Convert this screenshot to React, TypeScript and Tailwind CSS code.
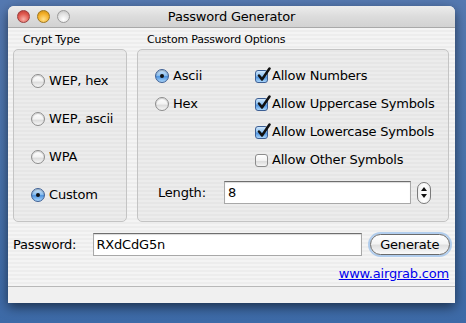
import React from "react";

const font = { fontFamily: '"DejaVu Sans", "Liberation Sans", sans-serif' };

function Radio({ on }: { on?: boolean }) {
  if (on) {
    return (
      <div className="relative w-[14px] h-[14px] rounded-full border border-[#3d5f94] bg-[linear-gradient(180deg,#cfe6fb_0%,#8cc0f0_45%,#4f94e0_55%,#a9d5fa_100%)] shadow-[inset_0_1px_1px_rgba(0,0,0,0.25)] flex items-center justify-center shrink-0">
        <div className="w-[4px] h-[4px] rounded-full bg-[#111]" />
      </div>
    );
  }
  return (
    <div className="w-[14px] h-[14px] rounded-full border border-[#8c8c8c] bg-[linear-gradient(180deg,#ffffff_0%,#f2f2f2_50%,#dcdcdc_60%,#f6f6f6_100%)] shadow-[inset_0_1px_1px_rgba(0,0,0,0.2)] shrink-0" />
  );
}

function Check({ on }: { on?: boolean }) {
  return (
    <div
      className={
        "relative w-[13px] h-[13px] rounded-[3px] border shrink-0 " +
        (on
          ? "border-[#3d5f94] bg-[linear-gradient(180deg,#cfe6fb_0%,#8cc0f0_45%,#4f94e0_55%,#a9d5fa_100%)]"
          : "border-[#8c8c8c] bg-[linear-gradient(180deg,#ffffff_0%,#f2f2f2_50%,#dcdcdc_60%,#f6f6f6_100%)]")
      }
    >
      {on && (
        <svg className="absolute left-[1px] top-[-4px]" width="14" height="15" viewBox="0 0 14 15">
          <path d="M2 8.5 L5 12.5 L12.5 1.5" stroke="#111" strokeWidth="2.5" fill="none" strokeLinecap="round" strokeLinejoin="round" />
        </svg>
      )}
    </div>
  );
}

function TextField({ value, w }: { value: string; w: string }) {
  return (
    <div
      className={
        w +
        " h-[23px] bg-white border border-[#a8a8a8] border-t-[#6e6e6e] shadow-[inset_0_1px_1px_rgba(0,0,0,0.15)] flex items-center pl-[3px] text-[13px] tracking-[-0.2px] text-black"
      }
    >
      {value}
    </div>
  );
}

export default function App() {
  return (
    <div
      className="w-[466px] h-[323px] overflow-hidden bg-[linear-gradient(180deg,#5579b1_0%,#4a74ad_50%,#3d6aa7_100%)] pt-[6px] pl-[8px]"
      style={font}
    >
      <div className="w-[447px] h-[297px] rounded-t-[6px] overflow-hidden shadow-[0_4px_12px_rgba(0,0,0,0.55)] flex flex-col bg-[repeating-linear-gradient(180deg,#ededed_0px,#ededed_2px,#f4f4f4_2px,#f4f4f4_4px)]">
        {/* title bar */}
        <div className="relative h-[22px] shrink-0 bg-[linear-gradient(180deg,#ececec_0%,#dcdcdc_50%,#d2d2d2_100%)] border-b border-[#a9a9a9] flex items-center justify-center">
          <div className="absolute left-[9px] top-[4px] flex gap-[7px]">
            <div className="w-[13px] h-[13px] rounded-full border border-[#9a3d3d] bg-[radial-gradient(circle_at_50%_75%,#f8b0a8_0%,#e05a50_55%,#b83530_100%)]" />
            <div className="w-[13px] h-[13px] rounded-full border border-[#a0761c] bg-[radial-gradient(circle_at_50%_75%,#ffe08a_0%,#f5b12a_55%,#c98a10_100%)]" />
            <div className="w-[13px] h-[13px] rounded-full border border-[#9a9a9a] bg-[radial-gradient(circle_at_50%_75%,#ffffff_0%,#e2e2e2_55%,#bdbdbd_100%)]" />
          </div>
          <span className="text-[13px] tracking-[-0.2px] text-black leading-none">Password Generator</span>
        </div>

        {/* body */}
        <div className="flex-1 flex flex-col px-[5px] pt-[5px] text-[13px] tracking-[-0.2px]">
          <div className="flex gap-[10px]">
            {/* crypt type */}
            <div className="flex flex-col w-[114px]">
              <div className="text-[11px] tracking-[-0.2px] leading-[13px] pl-[10px] h-[14px] text-black">Crypt Type</div>
              <div className="mt-[2px] h-[173px] rounded-[5px] border border-[#c4c4c4] bg-[repeating-linear-gradient(180deg,#e6e6e6_0px,#e6e6e6_2px,#ececec_2px,#ececec_4px)] pt-[12px] pl-[17px] flex flex-col">
                {[
                  ["WEP, hex", false],
                  ["WEP, ascii", false],
                  ["WPA", false],
                  ["Custom", true],
                ].map(([l, on]) => (
                  <div key={l as string} className="h-[38px] flex items-center gap-[4px] text-black">
                    <Radio on={on as boolean} />
                    <span>{l as string}</span>
                  </div>
                ))}
              </div>
            </div>

            {/* custom options */}
            <div className="flex flex-col w-[312px]">
              <div className="text-[11px] tracking-[-0.2px] leading-[13px] pl-[10px] h-[14px] text-black">Custom Password Options</div>
              <div className="mt-[2px] h-[173px] rounded-[5px] border border-[#c4c4c4] bg-[repeating-linear-gradient(180deg,#e6e6e6_0px,#e6e6e6_2px,#ececec_2px,#ececec_4px)] pt-[12px] flex flex-col">
                <div className="flex">
                  <div className="w-[117px] pl-[17px] flex flex-col">
                    <div className="h-[28px] flex items-center gap-[4px]">
                      <Radio on />
                      <span>Ascii</span>
                    </div>
                    <div className="h-[28px] flex items-center gap-[4px]">
                      <Radio />
                      <span>Hex</span>
                    </div>
                  </div>
                  <div className="flex flex-col">
                    {[
                      ["Allow Numbers", true],
                      ["Allow Uppercase Symbols", true],
                      ["Allow Lowercase Symbols", true],
                      ["Allow Other Symbols", false],
                    ].map(([l, on]) => (
                      <div key={l as string} className="h-[28px] flex items-center gap-[4px] text-black">
                        <Check on={on as boolean} />
                        <span>{l as string}</span>
                      </div>
                    ))}
                  </div>
                </div>
                <div className="mt-[7px] flex items-center pl-[20px]">
                  <span className="w-[66px]">Length:</span>
                  <TextField value="8" w="w-[187px]" />
                  <div className="ml-[6px] w-[14px] h-[22px] rounded-[7px] border border-[#7a7a7a] bg-[linear-gradient(90deg,#f0f0f0,#ffffff_50%,#f0f0f0)] flex flex-col items-center justify-center gap-[3px]">
                    <svg width="6" height="4" viewBox="0 0 6 4"><path d="M3 0 L6 4 L0 4 Z" fill="#111" /></svg>
                    <svg width="6" height="4" viewBox="0 0 6 4"><path d="M0 0 L6 0 L3 4 Z" fill="#111" /></svg>
                  </div>
                </div>
              </div>
            </div>
          </div>

          {/* password row */}
          <div className="mt-[11px] flex items-center">
            <span className="w-[81px]">Password:</span>
            <TextField value="RXdCdG5n" w="w-[274px]" />
            <div className="ml-[8px] w-[82px] h-[21px] rounded-full border border-[#6a6a6a] bg-[linear-gradient(180deg,#ffffff_0%,#f4f4f4_45%,#e0e0e0_55%,#fafafa_100%)] shadow-[0_0_0_2px_rgba(150,190,235,0.7)] flex items-center justify-center text-black">
              Generate
            </div>
          </div>

          <div className="mt-[10px] flex justify-end pr-[1px]">
            <span className="leading-[15px] text-[#0000ee] underline">www.airgrab.com</span>
          </div>
        </div>

        <div className="h-[17px] shrink-0 border-t border-[#b8b8b8] bg-[#f0f0f0]" />
      </div>
    </div>
  );
}
